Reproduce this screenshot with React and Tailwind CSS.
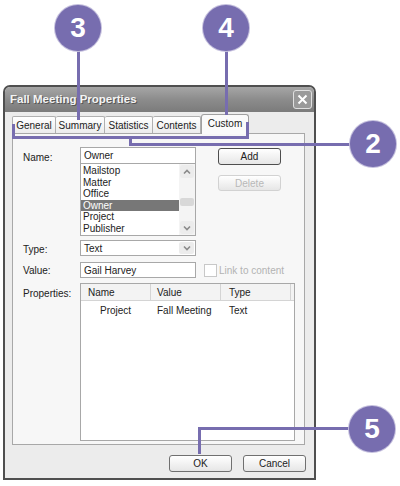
import React from 'react';

// callout badge over the screenshot
function Callout({ n, pos }) {
    return (
        <div className={`absolute z-20 w-[46px] h-[46px] rounded-full bg-[#776daf] ring-1 ring-[#c4bfdd] flex items-center justify-center text-white font-bold text-[28px] leading-none font-['Liberation_Sans_Narrow','Liberation_Sans',sans-serif] ${pos}`}>
            {n}
        </div>
    );
}

function Chevron({ down }) {
    return (
        <svg width="8" height="6" viewBox="0 0 8 6">
            <polyline
                points={down ? '1,1.5 4,4.5 7,1.5' : '1,4.5 4,1.5 7,4.5'}
                fill="none"
                stroke="#8a8a8a"
                strokeWidth="1.6"
            />
        </svg>
    );
}

function Button({ children, className }) {
    return (
        <div className={`w-[63px] flex items-center justify-center rounded-[3px] border bg-linear-to-b from-white to-[#e6e6e6] ${className}`}>
            {children}
        </div>
    );
}

const items = ['Mailstop', 'Matter', 'Office', 'Owner', 'Project', 'Publisher'];

export default function App() {
    return (
        <div className="relative w-[400px] h-[486px] bg-white pt-[85px] pl-[3px] overflow-hidden font-['Liberation_Sans',Arial,sans-serif] text-[10px] text-[#222]">
            {/* annotations */}
            <Callout n="3" pos="left-[55px] top-[5px]" />
            <Callout n="4" pos="left-[203px] top-[5px]" />
            <Callout n="2" pos="left-[350px] top-[121px]" />
            <Callout n="5" pos="left-[349px] top-[406px]" />
            <div className="absolute z-10 left-[77px] top-[48px] w-[3px] h-[72px] bg-[#776daf]" />
            <div className="absolute z-10 left-[225px] top-[48px] w-[3px] h-[67px] bg-[#776daf]" />
            <div className="absolute z-10 left-[12px] top-[124px] w-[3px] h-[15px] bg-[#776daf]" />
            <div className="absolute z-10 left-[12px] top-[136px] w-[237px] h-[3px] bg-[#776daf]" />
            <div className="absolute z-10 left-[246px] top-[122px] w-[3px] h-[17px] bg-[#776daf]" />
            <div className="absolute z-10 left-[129px] top-[136px] w-[3px] h-[10px] bg-[#776daf]" />
            <div className="absolute z-10 left-[129px] top-[143px] w-[224px] h-[3px] bg-[#776daf]" />
            <div className="absolute z-10 left-[198px] top-[427px] w-[154px] h-[3px] bg-[#776daf]" />
            <div className="absolute z-10 left-[198px] top-[427px] w-[3px] h-[27px] bg-[#776daf]" />

            {/* dialog */}
            <div className="w-[313px] border-2 border-[#4f4f4f] rounded-t-[7px] overflow-hidden bg-[#ececec]">
                <div className="h-[25px] flex items-center justify-between pl-[5px] pr-[2px] bg-linear-to-b from-[#a6a6a6] via-[#8c8c8c] to-[#7b7b7b]">
                    <span className="text-[11.5px] font-bold text-[#f4f4f4] [text-shadow:1px_1px_0_#555]">Fall Meeting Properties</span>
                    <div className="w-[19px] h-[19px] rounded-[3px] border border-[#e0e0e0] bg-[#9a9a9a] flex items-center justify-center">
                        <svg width="11" height="11" viewBox="0 0 11 11">
                            <path d="M1.5 1.5 L9.5 9.5 M9.5 1.5 L1.5 9.5" stroke="#fff" strokeWidth="2" />
                        </svg>
                    </div>
                </div>

                <div className="pt-[2px] pl-[7px] pr-[8px] pb-[6px]">
                    {/* tabs */}
                    <div className="flex items-end h-[19px]">
                        <div className="w-[44px] h-[17px] flex items-center justify-center border border-b-0 border-[#b0b0b0] rounded-t-[2px] bg-linear-to-b from-white to-[#ececec]">General</div>
                        <div className="w-[49px] h-[17px] flex items-center justify-center border border-b-0 border-l-0 border-[#b0b0b0] rounded-t-[2px] bg-linear-to-b from-white to-[#ececec]">Summary</div>
                        <div className="w-[48px] h-[17px] flex items-center justify-center border border-b-0 border-l-0 border-[#b0b0b0] rounded-t-[2px] bg-linear-to-b from-white to-[#ececec]">Statistics</div>
                        <div className="w-[48px] h-[17px] flex items-center justify-center border border-b-0 border-l-0 border-[#b0b0b0] rounded-t-[2px] bg-linear-to-b from-white to-[#ececec]">Contents</div>
                        <div className="relative w-[48px] h-[20px] -mb-px flex items-center justify-center border border-b-0 border-[#a0a0a0] rounded-t-[3px] bg-[#fafafa] pb-[2px]">Custom</div>
                    </div>

                    {/* panel */}
                    <div className="w-[293px] h-[312px] border border-[#a8a8a8] bg-[#f7f7f7] pt-[13px] pl-[10px]">
                        <div className="flex">
                            <div className="w-[57px] pt-[3px]">Name:</div>
                            <div className="w-[116px]">
                                <div className="h-[17px] border border-[#a8a8a8] bg-white px-[3px] flex items-center">Owner</div>
                                <div className="h-[72px] border border-t-0 border-[#a8a8a8] bg-white flex">
                                    <div className="flex-1 pt-[1px]">
                                        {items.map((it) => (
                                            <div
                                                key={it}
                                                className={`h-[11.6px] leading-[11.6px] px-[2px] ${it === 'Owner' ? 'bg-[#777] text-white' : ''}`}
                                            >
                                                {it}
                                            </div>
                                        ))}
                                    </div>
                                    <div className="w-[16px] flex flex-col bg-[#f4f4f4] p-[1px]">
                                        <div className="h-[13px] rounded-[2px] bg-[#ececec] flex items-center justify-center"><Chevron /></div>
                                        <div className="flex-1 pt-[20px]">
                                            <div className="h-[8px] rounded-[2px] bg-[#d8d8d8]" />
                                        </div>
                                        <div className="h-[13px] rounded-[2px] bg-[#ececec] flex items-center justify-center"><Chevron down /></div>
                                    </div>
                                </div>
                            </div>
                            <div className="ml-[22px] pt-[1px]">
                                <Button className="h-[17px] border-[#4e4e4e]">Add</Button>
                                <Button className="h-[16px] mt-[10px] border-[#d2d2d2] text-[#b8b8b8]">Delete</Button>
                            </div>
                        </div>

                        <div className="flex mt-[4px]">
                            <div className="w-[57px] pt-[2px]">Type:</div>
                            <div className="w-[116px] h-[16px] border border-[#a8a8a8] bg-white flex">
                                <div className="flex-1 px-[3px] flex items-center">Text</div>
                                <div className="w-[15px] m-[1px] rounded-[2px] bg-[#ececec] flex items-center justify-center"><Chevron down /></div>
                            </div>
                        </div>

                        <div className="flex mt-[5px] items-center">
                            <div className="w-[57px]">Value:</div>
                            <div className="w-[116px] h-[16px] border border-[#a8a8a8] bg-white px-[3px] flex items-center">Gail Harvey</div>
                            <div className="ml-[8px] w-[13px] h-[13px] border border-[#c8c8c8] bg-white" />
                            <div className="ml-[2px] text-[#b3b3b3]">Link to content</div>
                        </div>

                        <div className="flex mt-[5px]">
                            <div className="w-[57px] pt-[3px]">Properties:</div>
                            <div className="w-[215px] h-[158px] border border-[#a8a8a8] bg-white">
                                <div className="h-[17px] flex bg-[#f3f3f3] border-b border-[#d4d4d4]">
                                    <div className="w-[70px] pl-[7px] flex items-center border-r border-[#d4d4d4]">Name</div>
                                    <div className="w-[70px] pl-[6px] flex items-center border-r border-[#d4d4d4]">Value</div>
                                    <div className="w-[70px] pl-[8px] flex items-center border-r border-[#d4d4d4]">Type</div>
                                </div>
                                <div className="h-[14px] mt-[2px] flex items-center">
                                    <div className="w-[70px] pl-[19px]">Project</div>
                                    <div className="w-[70px] pl-[6px]">Fall Meeting</div>
                                    <div className="w-[70px] pl-[8px]">Text</div>
                                </div>
                            </div>
                        </div>
                    </div>

                    {/* footer */}
                    <div className="flex justify-end gap-[11px] pt-[10px]">
                        <Button className="h-[17px] border-[#707070]">OK</Button>
                        <Button className="h-[17px] border-[#707070]">Cancel</Button>
                    </div>
                </div>
            </div>
        </div>
    );
}
